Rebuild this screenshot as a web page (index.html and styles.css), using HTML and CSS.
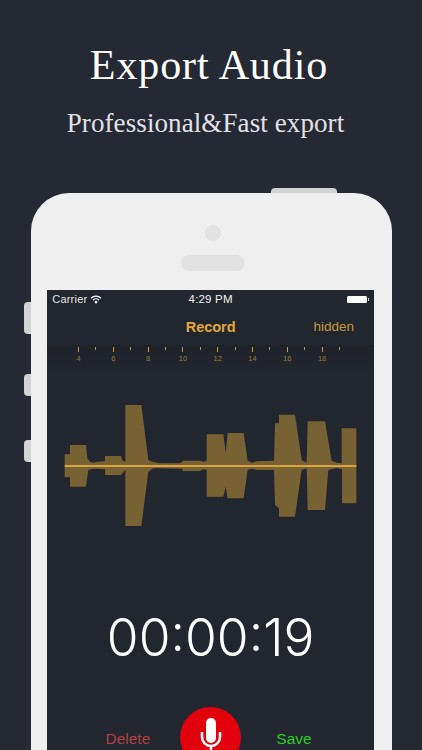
FILE: index.html
```html
<!DOCTYPE html>
<html lang="en">
<head>
<meta charset="utf-8">
<title>Export Audio</title>
<link rel="stylesheet" href="styles.css">
</head>
<body>
<main class="page">
  <h1 class="title">Export Audio</h1>
  <p class="subtitle">Professional&amp;Fast export</p>
  <section class="phone">
    <span class="btn btn-top"></span>
    <span class="btn btn-mute"></span>
    <span class="btn btn-up"></span>
    <span class="btn btn-down"></span>
    <div class="bezel">
      <span class="camera"></span>
      <span class="speaker"></span>
    </div>
    <div class="screen">
      <div class="status">
        <div class="status-left">
          <span>Carrier</span>
          <svg class="wifi" viewBox="0 0 12 9" width="12" height="9"><path d="M6 8.800 4.300 6.900a2.500 2.500 0 0 1 3.400 0z" fill="#fff"/><path d="M2.900 5.200a4.500 4.500 0 0 1 6.200 0M1 3.200a7.200 7.200 0 0 1 10 0" fill="none" stroke="#fff" stroke-width="1.200"/></svg>
        </div>
        <div class="status-time">4:29 PM</div>
        <div class="status-right">
          <span class="battery"></span><span class="battery-tip"></span>
        </div>
      </div>
      <div class="nav">
        <span></span>
        <span class="nav-title">Record</span>
        <span class="nav-action">hidden</span>
      </div>
      <div class="ruler">
        <div class="tick-col"><i class="major"></i><b>4</b></div><div class="tick-col"><i></i></div>
        <div class="tick-col"><i class="major"></i><b>6</b></div><div class="tick-col"><i></i></div>
        <div class="tick-col"><i class="major"></i><b>8</b></div><div class="tick-col"><i></i></div>
        <div class="tick-col"><i class="major"></i><b>10</b></div><div class="tick-col"><i></i></div>
        <div class="tick-col"><i class="major"></i><b>12</b></div><div class="tick-col"><i></i></div>
        <div class="tick-col"><i class="major"></i><b>14</b></div><div class="tick-col"><i></i></div>
        <div class="tick-col"><i class="major"></i><b>16</b></div><div class="tick-col"><i></i></div>
        <div class="tick-col"><i class="major"></i><b>18</b></div><div class="tick-col"><i></i></div>
      </div>
      <svg class="wave" viewBox="0 0 960 450" width="320" height="150">
        <polygon fill="#786132" points="44,228 44,193 60,193 60,165 108,165 112,205 120,215 130,218 140,215 165,214 165,198 213,198 218,212 226,215 226,45 274,45 295,210 310,216 330,220 385,220 398,216 398,212 450,212 460,216 470,212 470,133 520,133 527,190 533,129 581,129 593,212 605,218 620,214 672,212 675,100 687,100 687,74 735,74 755,210 770,218 773,94 825,94 845,212 860,218 875,220 875,115 919,115 919,340 876,340 876,238 860,234 835,240 825,360 773,360 770,235 755,240 735,380 687,380 687,355 675,345 672,240 620,240 605,236 593,240 581,325 533,325 527,290 520,320 470,320 470,240 460,238 450,243 398,243 398,236 330,235 310,235 295,245 274,408 226,408 226,240 213,255 165,255 165,238 130,236 115,240 108,290 60,290 60,262 44,262"/>
        <rect x="44" y="225" width="875" height="6" fill="#d9a440"/>
      </svg>
      <div class="timer">00:00:19</div>
      <div class="controls">
        <span class="delete">Delete</span>
        <div class="record">
          <svg viewBox="0 0 24 40" width="24" height="40"><rect x="7" y="0" width="10" height="25" rx="5" fill="#fff"/><path d="M3 14v5a9 9 0 0 0 18 0v-5M12 28v12" fill="none" stroke="#fff" stroke-width="2.500"/></svg>
        </div>
        <span class="save">Save</span>
      </div>
    </div>
  </section>
</main>
</body>
</html>
```
FILE: styles.css
```css
html, body {
  margin: 0;
  padding: 0;
  height: 750px;
  overflow: hidden;
  background: #252933;
}
.page {
  display: flex;
  flex-direction: column;
  height: 750px;
  overflow: hidden;
}
.title {
  margin: 41px 0 0;
  padding-right: 4px;
  height: 48px;
  text-align: center;
  font: 400 42px/48px "Liberation Serif", serif;
  letter-spacing: 0.900px;
  color: #fff;
}
.subtitle {
  margin: 18px 0 0;
  padding-right: 11px;
  text-align: center;
  font: 400 27px/32px "Liberation Serif", serif;
  letter-spacing: 0.100px;
  color: #e2e2e6;
}
.phone {
  position: relative;
  margin: 54px 30px 0 30.500px;
  width: 361.500px;
  flex: none;
  height: 640px;
  background: #efefef;
  border-radius: 38px 38px 0 0;
}
.btn {
  position: absolute;
  background: #d4d4d4;
}
.btn-top {
  left: 240.500px;
  top: -5px;
  width: 66px;
  height: 5px;
  border-radius: 4px 4px 0 0;
}
.btn-mute, .btn-up, .btn-down {
  left: -6.500px;
  width: 6.500px;
  border-radius: 4px 0 0 4px;
}
.btn-mute { top: 109px; height: 32px; }
.btn-up { top: 181px; height: 22px; }
.btn-down { top: 247px; height: 22px; }
.bezel {
  height: 97px;
  padding-left: 3px;
  display: flex;
  flex-direction: column;
  align-items: center;
}
.camera {
  margin-top: 32px;
  width: 16px;
  height: 16px;
  border-radius: 50%;
  background: #e2e2e2;
}
.speaker {
  margin-top: 14px;
  width: 64px;
  height: 16px;
  border-radius: 8px;
  background: #e2e2e2;
}
.screen {
  margin: 0 18px 0 16.800px;
  height: 460px;
  background: #22262f;
  display: flex;
  flex-direction: column;
  font-family: "Liberation Sans", Arial, sans-serif;
}
.status {
  height: 18px;
  padding: 0 5px;
  display: grid;
  grid-template-columns: 1fr auto 1fr;
  align-items: center;
  font-size: 11px;
  color: #e4e4e4;
  letter-spacing: 0.200px;
}
.status-left {
  display: flex;
  align-items: center;
  gap: 3px;
}
.status-time {
  color: #f4f4f4;
  font-size: 11.500px;
}
.status-right {
  display: flex;
  justify-content: flex-end;
  align-items: center;
}
.battery {
  width: 20px;
  height: 7px;
  background: #fff;
  border-radius: 1.500px;
}
.battery-tip {
  width: 1px;
  height: 3px;
  margin-left: 1px;
  background: #ddd;
}
.nav {
  height: 37px;
  display: grid;
  grid-template-columns: 1fr auto 1fr;
  align-items: center;
  padding: 0 20px;
}
.nav-title {
  font-size: 14.500px;
  font-weight: 700;
  color: #e3a935;
}
.nav-action {
  text-align: right;
  font-size: 13.500px;
  color: #c49a3e;
}
.ruler {
  height: 45px;
  padding-left: 22.600px;
  display: flex;
  background: linear-gradient(#1f2229, #22262f 30px);
}
.tick-col {
  width: 17.400px;
  flex: none;
  display: flex;
  flex-direction: column;
  align-items: center;
}
.tick-col i {
  display: block;
  width: 1px;
  height: 3px;
  margin-top: 2px;
  background: #b9923c;
}
.tick-col i.major {
  height: 5px;
  background: #c99a38;
}
.tick-col b {
  margin-top: 2px;
  font-weight: 400;
  font-size: 7.500px;
  line-height: 9px;
  color: #97793a;
}
.wave {
  display: block;
  margin: 0 0 0 3px;
  flex: none;
}
.timer {
  margin-top: 65px;
  height: 64px;
  line-height: 64px;
  text-align: center;
  font-family: Inter, "Liberation Sans", sans-serif;
  font-weight: 300;
  font-size: 51.500px;
  color: #fff;
}
.controls {
  margin-top: 38px;
  display: grid;
  grid-template-columns: 133px 61px 1fr;
  align-items: start;
  height: 43px;
  overflow: hidden;
  font-size: 15.500px;
}
.delete {
  margin-top: 23px;
  padding-right: 30px;
  text-align: right;
  color: #b2413f;
}
.save {
  margin-top: 23px;
  padding-left: 35px;
  color: #2ecb2a;
}
.record {
  width: 61px;
  height: 61px;
  border-radius: 50%;
  background: #e2000c;
  display: flex;
  justify-content: center;
  padding-top: 11px;
  box-sizing: border-box;
}
```
